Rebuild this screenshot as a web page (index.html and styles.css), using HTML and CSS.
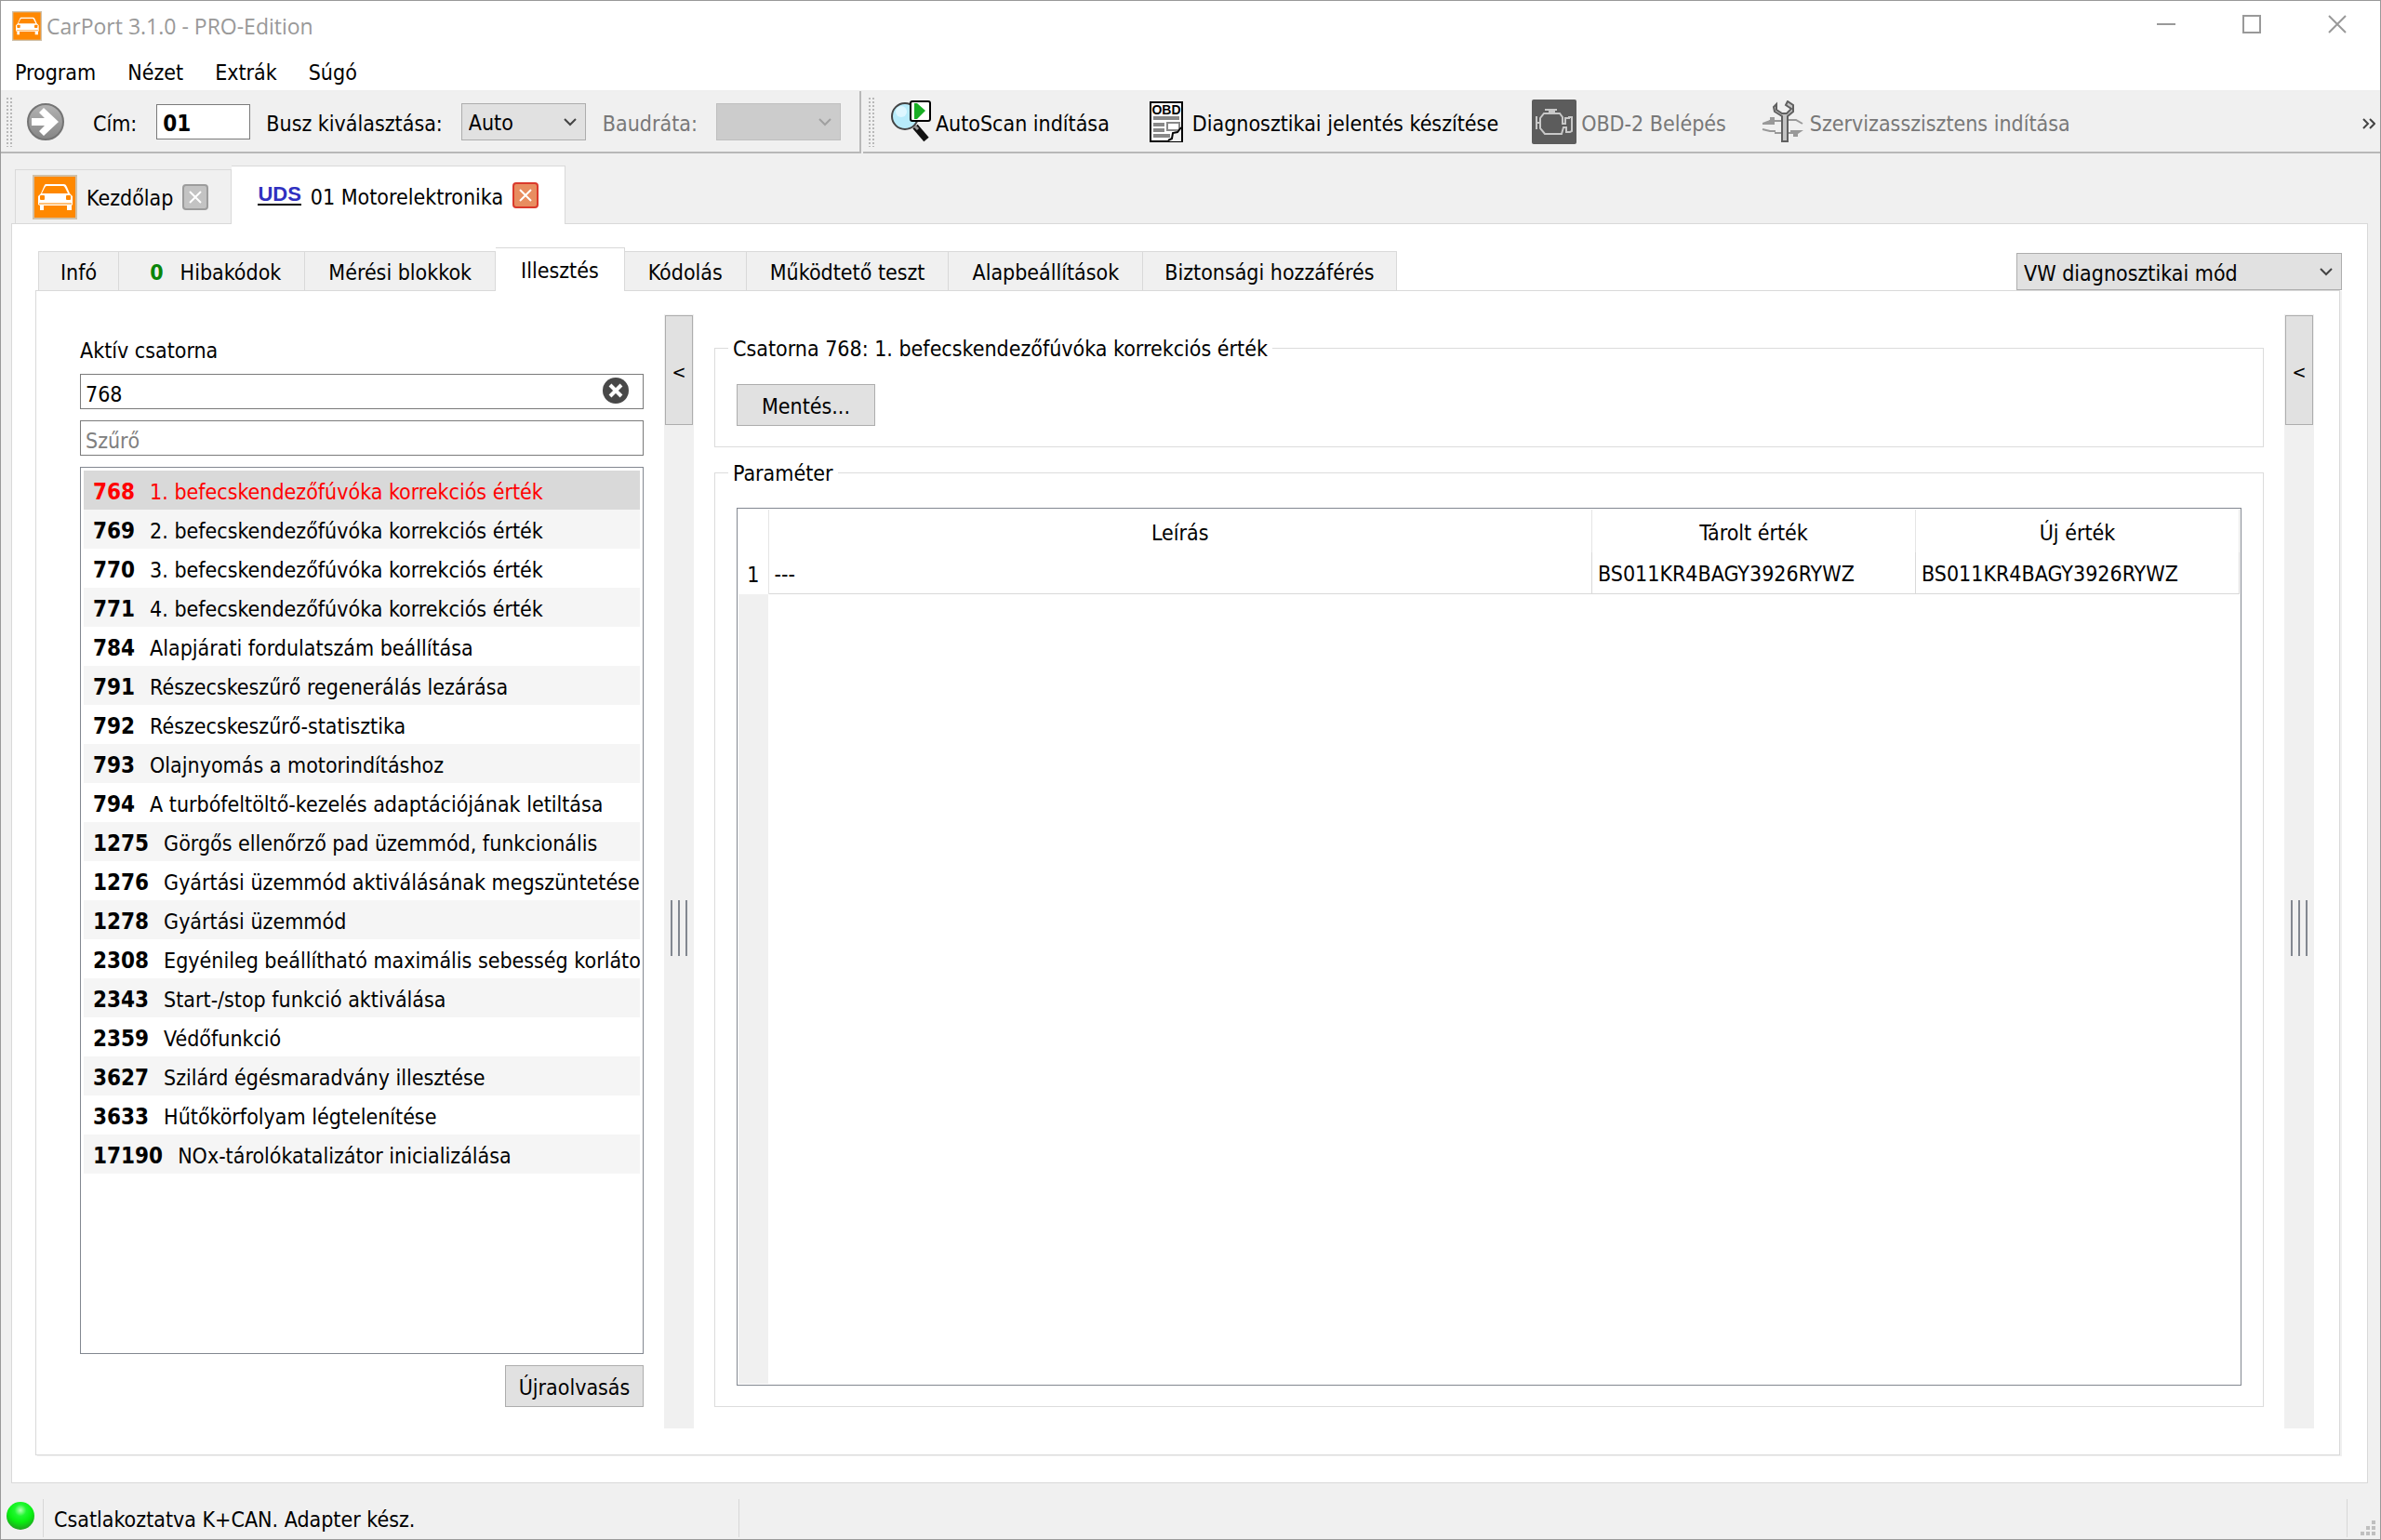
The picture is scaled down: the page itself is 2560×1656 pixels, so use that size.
FILE: index.html
```html
<!DOCTYPE html>
<html lang="hu">
  <head>
    <meta charset="UTF-8" />
    <meta name="viewport" content="width=device-width, initial-scale=1.0" />
    <title>CarPort 3.1.0 - PRO-Edition</title>
    <link rel="stylesheet" href="styles.css">
  </head>
  <body>
    <svg class="symbols" width="0" height="0">
      <symbol id="car" viewBox="0 0 48 48">
        <rect x="1" y="1" width="46" height="46" fill="#ff8800" stroke="#d0c0a8" stroke-width="2" />
        <path d="M14 10h20q2 0 3 3l3 7 3 3v9l-1 1v5h-5v-5H12v5H8v-5l-2-1v-9l3-3 3-7q1-3 2-3z" fill="#fff" />
        <path d="M15 12h18q1 0 2 2l3 6H10l3-6q1-2 2-2z" fill="#ff8800" />
        <rect x="8" y="22" width="5" height="5" rx="1" fill="#ff8800" />
        <rect x="36" y="22" width="5" height="5" rx="1" fill="#ff8800" />
        <path d="M7 31h35" stroke="#ffc078" stroke-width="2" />
      </symbol>
    </svg>
    <div class="window">
      <header class="titlebar">
        <svg class="logo-small"><use href="#car" /></svg>
        <span class="title">CarPort 3.1.0 - PRO-Edition</span>
        <div class="window-buttons">
          <button aria-label="Kis méret"><svg width="20" height="20" viewBox="0 0 20 20"><path d="M0 10h20" /></svg></button>
          <button aria-label="Teljes méret"><svg width="20" height="20" viewBox="0 0 20 20"><path d="M1 1h18v18H1z" /></svg></button>
          <button aria-label="Bezárás"><svg width="20" height="20" viewBox="0 0 20 20"><path d="M1 1l18 18M19 1L1 19" /></svg></button>
        </div>
      </header>
      <nav class="menu">
        <button>Program</button>
        <button>Nézet</button>
        <button>Extrák</button>
        <button>Súgó</button>
      </nav>

      <div class="toolbars">
        <div class="toolbar address-bar">
          <span class="handle"></span>
          <button class="go" aria-label="Ugrás">
            <svg width="42" height="44" viewBox="0 0 42 44">
              <defs>
                <linearGradient id="goFill" x1="0" y1="0" x2="0" y2="1">
                  <stop offset="0" stop-color="#b4b4b4" />
                  <stop offset="1" stop-color="#858585" />
                </linearGradient>
              </defs>
              <circle cx="21" cy="22" r="19" fill="url(#goFill)" stroke="#747474" stroke-width="2" />
              <path d="M6 18h14l-6-6 5-5 16 15-16 15-5-5 6-6H6z" fill="#fff" />
            </svg>
          </button>
          <label class="label-address" for="address">Cím:</label>
          <input id="address" class="address" type="text" value="01" />
          <label class="label-bus" for="bus">Busz kiválasztása:</label>
          <span class="select-box">
            <select id="bus"><option>Auto</option></select>
            <svg class="chevron" viewBox="0 0 14 9"><path d="M1 1l6 6 6-6" /></svg>
          </span>
          <label class="label-baud" for="baud">Baudráta:</label>
          <span class="select-box disabled">
            <select id="baud" disabled><option></option></select>
            <svg class="chevron" viewBox="0 0 14 9"><path d="M1 1l6 6 6-6" /></svg>
          </span>
        </div>
        <div class="toolbar action-bar">
          <span class="handle"></span>
          <button class="tool">
            <svg width="48" height="48" viewBox="0 0 48 48">
              <path d="M28 29l12 14" stroke="#111" stroke-width="7" />
              <path d="M26 27l5 5" stroke="#999" stroke-width="3" />
              <circle cx="17" cy="18" r="14" fill="#b8ecfb" stroke="#444" stroke-width="2" />
              <circle cx="13" cy="13" r="6" fill="#def7ff" />
              <rect x="23" y="2" width="21" height="21" rx="2" fill="#fff" stroke="#000" stroke-width="2" />
              <path d="M27 4h3l9 8-9 9h-3z" fill="#18ae24" />
            </svg>
            <span>AutoScan indítása</span>
          </button>
          <button class="tool tool-report">
            <svg width="36" height="44" viewBox="0 0 36 44">
              <rect x="1" y="1" width="34" height="42" fill="#fff" stroke="#000" stroke-width="2" />
              <text x="18" y="14" text-anchor="middle" class="icon-text">OBD</text>
              <path d="M4 18h28M4 25h12M4 31h12M4 37h18" stroke="#888" stroke-width="4" />
              <rect x="19" y="23" width="13" height="8" fill="#fff" stroke="#888" stroke-width="2" />
              <path d="M20 43l5-7 9-8v15z" fill="#eee" />
              <path d="M20 42l4-2 1-6 5-1 4-5" fill="none" stroke="#000" stroke-width="2" />
            </svg>
            <span>Diagnosztikai jelentés készítése</span>
          </button>
          <button class="tool tool-obd" disabled>
            <svg width="48" height="48" viewBox="0 0 48 48">
              <rect width="48" height="48" rx="2" fill="#5c5c5c" />
              <path d="M14 11h13M18 13h7M21 12v3M5 18v14M5 25h4M9 20l4-5h17l3 4v7h3v-6h4v-1h3v15l-2 1h-4v-5h-3l-2 7H14l-5-6z" fill="none" stroke="#c8c8c8" stroke-width="2" />
            </svg>
            <span>OBD-2 Belépés</span>
          </button>
          <button class="tool tool-service" disabled>
            <svg width="46" height="46" viewBox="0 0 46 46">
              <path d="M8 22h13M28 21h9l7 4M1 31l8 2h6M14 35h25" fill="none" stroke="#999" stroke-width="2" />
              <path d="M1 24l8-3v-3h5v8H1zM45 32l-6 4v3h-5v-4h-3v-3z" fill="#999" />
              <path d="M22 44V17l-8-5-1-5 3-3v6l6 4h5l5-5-6-4 2-4 6 4v7l-6 5v27z" fill="#c4c4c4" stroke="#606060" stroke-width="2" />
            </svg>
            <span>Szervizasszisztens indítása</span>
          </button>
          <button class="more" aria-label="Továbbiak">
            <svg width="14" height="12" viewBox="0 0 14 12"><path d="M1 1l5 5-5 5M8 1l5 5-5 5" /></svg>
          </button>
        </div>
      </div>

      <div class="main-tabs">
        <div class="main-tab">
          <svg class="logo"><use href="#car" /></svg>
          <span class="tab-title">Kezdőlap</span>
          <button class="close" aria-label="Bezárás"><svg width="14" height="14" viewBox="0 0 14 14"><path d="M1 1l12 12M13 1L1 13" /></svg></button>
        </div>
        <div class="main-tab active">
          <span class="uds">UDS</span>
          <span class="tab-title">01 Motorelektronika</span>
          <button class="close red" aria-label="Bezárás"><svg width="14" height="14" viewBox="0 0 14 14"><path d="M1 1l12 12M13 1L1 13" /></svg></button>
        </div>
      </div>

      <main class="page">
        <div class="tab-row">
          <div class="tabs">
            <button class="tab">Infó</button>
            <button class="tab tab-faults"><b>0</b>Hibakódok</button>
            <button class="tab">Mérési blokkok</button>
            <button class="tab active">Illesztés</button>
            <button class="tab">Kódolás</button>
            <button class="tab">Működtető teszt</button>
            <button class="tab">Alapbeállítások</button>
            <button class="tab">Biztonsági hozzáférés</button>
          </div>
          <span class="select-box mode-box">
            <select class="mode" aria-label="Mód"><option>VW diagnosztikai mód</option></select>
            <svg class="chevron" viewBox="0 0 14 9"><path d="M1 1l6 6 6-6" /></svg>
          </span>
        </div>

        <div class="panel">
          <section class="channels">
            <label for="channel">Aktív csatorna</label>
            <div class="channel-box">
              <input id="channel" type="text" value="768" />
              <button class="clear" aria-label="Törlés">
                <svg width="28" height="28" viewBox="0 0 28 28"><circle cx="14" cy="14" r="14" fill="#484848" /><path d="M8 8l12 12M20 8L8 20" stroke="#fff" stroke-width="4" /></svg>
              </button>
            </div>
            <input class="filter" type="text" placeholder="Szűrő" aria-label="Szűrő" />
            <ul class="channel-list">
              <li class="selected"><b>768</b>1. befecskendezőfúvóka korrekciós érték</li>
              <li><b>769</b>2. befecskendezőfúvóka korrekciós érték</li>
              <li><b>770</b>3. befecskendezőfúvóka korrekciós érték</li>
              <li><b>771</b>4. befecskendezőfúvóka korrekciós érték</li>
              <li><b>784</b>Alapjárati fordulatszám beállítása</li>
              <li><b>791</b>Részecskeszűrő regenerálás lezárása</li>
              <li><b>792</b>Részecskeszűrő-statisztika</li>
              <li><b>793</b>Olajnyomás a motorindításhoz</li>
              <li><b>794</b>A turbófeltöltő-kezelés adaptációjának letiltása</li>
              <li><b>1275</b>Görgős ellenőrző pad üzemmód, funkcionális</li>
              <li><b>1276</b>Gyártási üzemmód aktiválásának megszüntetése</li>
              <li><b>1278</b>Gyártási üzemmód</li>
              <li><b>2308</b>Egyénileg beállítható maximális sebesség korlátozás</li>
              <li><b>2343</b>Start-/stop funkció aktiválása</li>
              <li><b>2359</b>Védőfunkció</li>
              <li><b>3627</b>Szilárd égésmaradvány illesztése</li>
              <li><b>3633</b>Hűtőkörfolyam légtelenítése</li>
              <li><b>17190</b>NOx-tárolókatalizátor inicializálása</li>
            </ul>
            <button class="button reload">Újraolvasás</button>
          </section>

          <div class="splitter">
            <button aria-label="Összecsukás">&lt;</button>
            <span class="grip"></span>
          </div>

          <section class="details">
            <fieldset class="channel-group">
              <legend>Csatorna 768: 1. befecskendezőfúvóka korrekciós érték</legend>
              <button class="button save">Mentés...</button>
            </fieldset>
            <fieldset class="param-group">
              <legend>Paraméter</legend>
              <div class="table-box">
                <table>
                  <thead>
                    <tr><th class="num"></th><th>Leírás</th><th class="value">Tárolt érték</th><th class="value">Új érték</th></tr>
                  </thead>
                  <tbody>
                    <tr><th class="num">1</th><td>---</td><td>BS011KR4BAGY3926RYWZ</td><td>BS011KR4BAGY3926RYWZ</td></tr>
                  </tbody>
                </table>
                <div class="gutter"></div>
              </div>
            </fieldset>
          </section>

          <div class="splitter">
            <button aria-label="Összecsukás">&lt;</button>
            <span class="grip"></span>
          </div>
        </div>
      </main>

      <footer class="statusbar">
        <svg class="led" width="32" height="34" viewBox="0 0 32 34">
          <defs>
            <radialGradient id="ledFill" cx="0.5" cy="0.3" r="0.7">
              <stop offset="0" stop-color="#b4ffb4" />
              <stop offset="0.3" stop-color="#20f830" />
              <stop offset="0.6" stop-color="#08f010" />
              <stop offset="1" stop-color="#20a020" />
            </radialGradient>
          </defs>
          <circle cx="16" cy="17" r="15" fill="url(#ledFill)" />
        </svg>
        <span class="status-text">Csatlakoztatva K+CAN. Adapter kész.</span>
        <span class="status-rest"></span>
        <svg class="size-grip" width="18" height="18" viewBox="0 0 18 18">
          <path d="M12 0h4v4h-4zM6 6h4v4H6zM12 6h4v4h-4zM0 12h4v4H0zM6 12h4v4H6zM12 12h4v4h-4z" fill="#bfbfbf" />
        </svg>
      </footer>
    </div>
  </body>
</html>
```

FILE: styles.css
```css
* {
  box-sizing: border-box;
}
body {
  margin: 0;
  color: #000;
  background-color: #f0f0f0;
}
body,
button,
input,
select {
  font-family: "DejaVu Sans Condensed", "DejaVu Sans", sans-serif;
  font-size: 23px;
  line-height: 30px;
}
button {
  color: #000;
  background: none;
  border: none;
  padding: 0;
}
.symbols {
  position: absolute;
}
.window {
  display: flex;
  flex-direction: column;
  height: 100vh;
  border: 1px solid #999;
}

/* title and menu */
.titlebar {
  display: flex;
  align-items: center;
  height: 53px;
  padding-left: 12px;
  background-color: #fff;
}
.logo-small {
  width: 32px;
  height: 32px;
}
.title {
  flex: 1;
  margin-left: 5px;
  font-family: "Open Sans", sans-serif;
  font-size: 23px;
  color: #999;
}
.window-buttons {
  display: flex;
}
.window-buttons button {
  width: 92px;
  height: 53px;
}
.window-buttons path,
.more path,
.chevron path {
  fill: none;
  stroke: #999;
  stroke-width: 2;
}
.menu {
  display: flex;
  gap: 34px;
  height: 43px;
  padding: 0 15px;
  background-color: #fff;
}
.menu button {
  height: 48px;
}

/* toolbars */
.toolbars {
  display: flex;
  height: 68px;
  border-top: 1px solid #eee;
}
.toolbar {
  display: flex;
  align-items: center;
  border-bottom: 2px solid #b8b8b8;
}
.toolbar label,
.tool span {
  padding-top: 5px;
}
.address-bar {
  border-right: 2px solid #b8b8b8;
  padding-right: 20px;
}
.action-bar {
  flex: 1;
  margin-left: 2px;
}
.handle {
  width: 7px;
  height: 54px;
  margin-left: 5px;
  background-image: radial-gradient(circle, #b8b8b8 1px, transparent 1px);
  background-size: 4px 4px;
}
.go {
  height: 44px;
  margin-left: 15px;
}
.label-address {
  margin: 0 21px 0 30px;
}
.address {
  width: 101px;
  height: 38px;
  padding: 5px 6px 0;
  font-weight: bold;
  font-size: 24px;
  border: 1px solid #7a7a7a;
}
.label-bus {
  margin: 0 20px 0 17px;
}
.label-baud {
  margin: 0 20px 0 18px;
  color: #787878;
}
.select-box {
  position: relative;
  display: flex;
}
select {
  appearance: none;
  width: 134px;
  height: 40px;
  padding: 3px 7px 0;
  color: #000;
  background-color: #e1e1e1;
  border: 1px solid #adadad;
  border-radius: 0;
  opacity: 1;
}
.disabled select {
  background-color: #ccc;
  border-color: #bfbfbf;
}
.chevron {
  position: absolute;
  right: 10px;
  top: 16px;
  width: 14px;
  height: 9px;
}
.chevron path {
  stroke: #444;
}
.disabled .chevron path {
  stroke: #a0a0a0;
}
.tool {
  display: flex;
  align-items: center;
  gap: 2px;
  margin-left: 16px;
}
.tool-report {
  gap: 10px;
  margin-left: 43px;
}
.tool-obd {
  gap: 5px;
  margin-left: 36px;
}
.tool-service {
  gap: 6px;
  margin-left: 38px;
}
.tool:disabled {
  color: #787878;
}
.icon-text {
  font-family: "Liberation Sans", sans-serif;
  font-size: 14px;
  font-weight: bold;
}
.more {
  margin: 0 5px 0 auto;
}
.more path {
  stroke: #444;
}

/* main tabs */
.main-tabs {
  display: flex;
  align-items: flex-end;
  height: 75px;
  padding: 13px 15px 0;
}
.main-tab {
  display: flex;
  align-items: center;
  gap: 10px;
  height: 58px;
  padding: 0 24px 0 18px;
  border: 1px solid #d9d9d9;
  border-bottom: none;
}
.main-tab.active {
  position: relative;
  height: 63px;
  margin-bottom: -1px;
  padding: 0 28px;
  background-color: #fff;
  border-left: none;
}
.tab-title {
  padding-top: 3px;
}
.logo {
  width: 48px;
  height: 48px;
}
.uds {
  font-family: "Liberation Sans", sans-serif;
  font-weight: bold;
  font-size: 22px;
  line-height: 20px;
  color: #3030c0;
  border-bottom: 2px solid #000;
}
.close {
  display: flex;
  align-items: center;
  justify-content: center;
  width: 28px;
  height: 28px;
  background-color: #c3c3c3;
  border: 2px solid #9c9c9c;
  border-radius: 4px;
}
.close path {
  stroke: #fff;
  stroke-width: 2;
}
.close.red {
  background-color: #e88d60;
  border-color: #da3a2c;
}

/* page */
.page {
  flex: 1;
  display: flex;
  flex-direction: column;
  margin: 0 13px 0 11px;
  padding: 25px 29px 29px 25px;
  background-color: #fff;
  border: 1px solid #d9d9d9;
}
.tab-row {
  display: flex;
  justify-content: space-between;
  align-items: flex-end;
}
.tabs {
  display: flex;
  align-items: flex-end;
  padding-left: 3px;
}
.tab {
  height: 42px;
  padding: 3px 25px 0;
  background-color: #f0f0f0;
  border: 1px solid #d9d9d9;
  border-left: none;
  border-bottom: none;
}
.tab:first-child {
  padding: 3px 23px 0;
  border-left: 1px solid #d9d9d9;
}
.tab:last-child {
  padding: 3px 23px 0;
}
.tab-faults b {
  margin: 0 18px 0 8px;
  color: #0a860a;
}
.tab.active {
  position: relative;
  height: 47px;
  margin-bottom: -1px;
  padding: 2px 27px 0;
  background-color: #fff;
}
.mode-box {
  margin-right: -2px;
}
.mode {
  width: 350px;
}
.panel {
  flex: 1;
  display: flex;
  padding: 25px 27px 28px 47px;
  border: 1px solid #d9d9d9;
  box-shadow: 2px 1px 0 #f0f0f0;
}

/* channel list */
.channels {
  display: flex;
  flex-direction: column;
  width: 606px;
  padding: 24px 0 23px;
}
.channels input {
  width: 100%;
  height: 38px;
  padding: 5px 5px 0;
  border: 1px solid #7a7a7a;
}
.channels input::placeholder {
  color: #808080;
  opacity: 1;
}
.channel-box {
  position: relative;
  display: flex;
  margin: 10px 0 12px;
}
.clear {
  position: absolute;
  right: 16px;
  top: 4px;
  height: 28px;
}
.channel-list {
  flex: 1;
  margin: 12px 0;
  padding: 3px;
  list-style-type: none;
  border: 1px solid #828790;
}
.channel-list li {
  height: 42px;
  padding: 8px 0 0 10px;
  overflow: hidden;
  white-space: nowrap;
}
.channel-list li:nth-child(even) {
  background-color: #f5f5f5;
}
.channel-list .selected {
  color: #f00;
  background-color: #d9d9d9;
}
.channel-list b {
  margin-right: 16px;
  font-size: 24px;
}
.button {
  height: 45px;
  padding-top: 2px;
  background-color: #e1e1e1;
  border: 1px solid #adadad;
}
.reload {
  align-self: flex-end;
  width: 149px;
}

/* splitters */
.splitter {
  display: flex;
  flex-direction: column;
  align-items: center;
  width: 32px;
  margin: 0 22px;
  background-color: #f0f0f0;
}
.splitter:last-child {
  margin-right: 0;
}
.splitter button {
  width: 30px;
  height: 118px;
  margin-top: 1px;
  padding-top: 4px;
  font-size: 20px;
  background-color: #e1e1e1;
  border: 1px solid #adadad;
}
.grip {
  width: 18px;
  height: 60px;
  margin-top: 511px;
  background: linear-gradient(90deg, #828790 2px, transparent 2px) 0 0 / 8px 60px;
}

/* details */
.details {
  flex: 1;
  display: flex;
  flex-direction: column;
  gap: 12px;
  padding: 21px 0 23px;
}
fieldset {
  min-width: 0;
  margin: 0;
  padding: 0 23px 22px;
  border: 1px solid #dcdcdc;
}
legend {
  margin-left: -9px;
  padding: 2px 5px 0;
  line-height: 28px;
}
.channel-group {
  height: 122px;
}
.save {
  width: 149px;
  margin-top: 24px;
}
.param-group {
  flex: 1;
}
.table-box {
  display: flex;
  flex-direction: column;
  height: calc(100% - 23px);
  margin-top: 23px;
  padding: 1px;
  border: 1px solid #828790;
}
table {
  width: 100%;
  table-layout: fixed;
  border-collapse: collapse;
}
th {
  height: 46px;
  padding: 3px 0 0;
  font-weight: normal;
  border-right: 1px solid #e5e5e5;
}
th.num {
  width: 32px;
  height: 44px;
}
.value {
  width: 348px;
}
td {
  height: 44px;
  padding: 2px 6px 0;
  border-right: 1px solid #d9d9d9;
  border-bottom: 1px solid #d9d9d9;
}
.gutter {
  flex: 1;
  width: 32px;
  background-color: #f0f0f0;
}

/* status bar */
.statusbar {
  display: flex;
  align-items: center;
  height: 60px;
  padding-top: 15px;
}
.led {
  margin: 0 8px 5px 5px;
}
.status-text {
  width: 749px;
  height: 41px;
  padding: 7px 11px 0;
  border: 1px solid #d7d7d7;
  border-width: 0 1px;
}
.status-rest {
  flex: 1;
  height: 41px;
  border-right: 1px solid #d7d7d7;
}
.size-grip {
  align-self: flex-end;
  margin: 0 3px 2px 14px;
}
```
